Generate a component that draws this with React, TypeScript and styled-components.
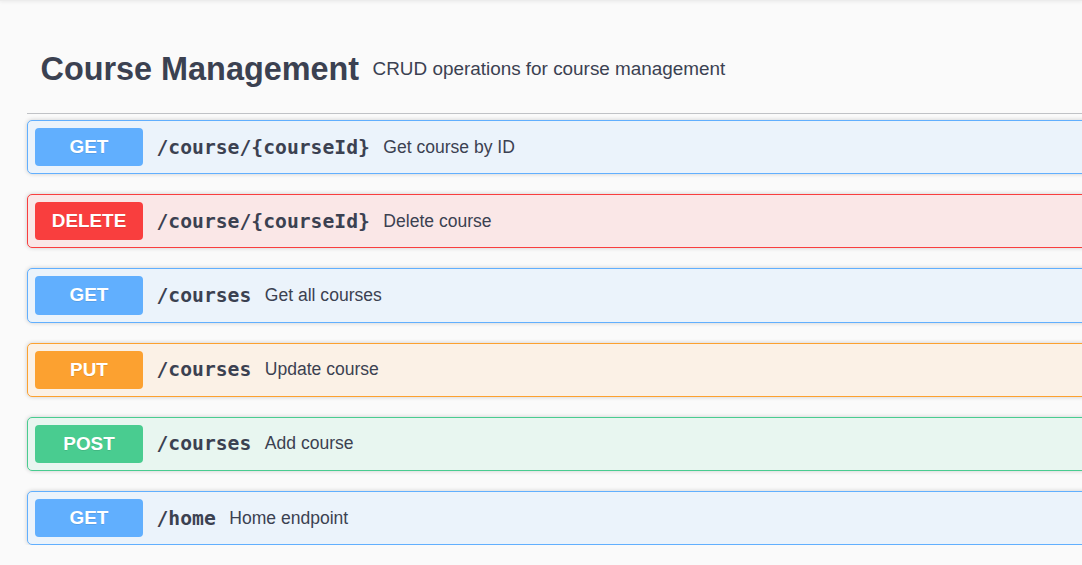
import React from "react";
import styled, { createGlobalStyle } from "styled-components";

const GlobalStyle = createGlobalStyle`
  html, body {
    margin: 0;
    padding: 0;
    background: #fafafa;
    overflow: hidden;
    font-family: "Liberation Sans", Arial, sans-serif;
    color: #3b4151;
  }
`;

type Method = "GET" | "DELETE" | "PUT" | "POST";

const palette: Record<Method, { main: string; bg: string }> = {
  GET: { main: "#61affe", bg: "#ebf3fb" },
  DELETE: { main: "#f93e3e", bg: "#fae7e7" },
  PUT: { main: "#fca130", bg: "#fbf1e6" },
  POST: { main: "#49cc90", bg: "#e8f6f0" },
};

const TopShadow = styled.div`
  height: 1px;
  background: #ececec;
  box-shadow: 0 1px 3px rgba(0, 0, 0, 0.12);
`;

const Wrapper = styled.div`
  width: 1300px;
  padding-left: 27px;
`;

const TagHeader = styled.div`
  display: flex;
  align-items: center;
  padding: 50px 27px 25px 13.5px;
  border-bottom: 1px solid rgba(59, 65, 81, 0.3);
  margin-bottom: 6px;
`;

const TagTitle = styled.h3`
  margin: 0;
  font-size: 32.4px;
  font-weight: 700;
  color: #3b4151;
`;

const TagDescription = styled.small`
  flex: 1;
  padding: 0 13.5px;
  font-size: 18.9px;
  color: #3b4151;
  position: relative;
  top: -1px;
`;

const List = styled.div`
  display: flex;
  flex-direction: column;
  gap: 20px;
`;

const Block = styled.div<{ $method: Method }>`
  display: flex;
  align-items: center;
  padding: 7px;
  border: 1px solid ${(p) => palette[p.$method].main};
  background: ${(p) => palette[p.$method].bg};
  border-radius: 5px;
  box-shadow: 0 0 4px rgba(0, 0, 0, 0.19);
`;

const MethodBadge = styled.span<{ $method: Method }>`
  min-width: 108px;
  padding: 8.1px 0;
  text-align: center;
  border-radius: 4px;
  background: ${(p) => palette[p.$method].main};
  color: #fff;
  font-family: "Liberation Sans", Arial, sans-serif;
  font-weight: 700;
  font-size: 18.9px;
  text-shadow: 0 1px 0 rgba(0, 0, 0, 0.1);
`;

const Path = styled.span`
  padding: 0 13.5px;
  font-family: "DejaVu Sans Mono", monospace;
  font-weight: 700;
  font-size: 19.7px;
  color: #3b4151;
`;

const Summary = styled.span`
  font-size: 17.55px;
  color: #3b4151;
`;

const ops: { method: Method; path: string; summary: string }[] = [
  { method: "GET", path: "/course/{courseId}", summary: "Get course by ID" },
  { method: "DELETE", path: "/course/{courseId}", summary: "Delete course" },
  { method: "GET", path: "/courses", summary: "Get all courses" },
  { method: "PUT", path: "/courses", summary: "Update course" },
  { method: "POST", path: "/courses", summary: "Add course" },
  { method: "GET", path: "/home", summary: "Home endpoint" },
];

export default function App() {
  return (
    <>
      <GlobalStyle />
      <TopShadow />
      <Wrapper>
        <TagHeader>
          <TagTitle>Course Management</TagTitle>
          <TagDescription>CRUD operations for course management</TagDescription>
        </TagHeader>
        <List>
          {ops.map((op, i) => (
            <Block key={i} $method={op.method}>
              <MethodBadge $method={op.method}>{op.method}</MethodBadge>
              <Path>{op.path}</Path>
              <Summary>{op.summary}</Summary>
            </Block>
          ))}
        </List>
      </Wrapper>
    </>
  );
}
